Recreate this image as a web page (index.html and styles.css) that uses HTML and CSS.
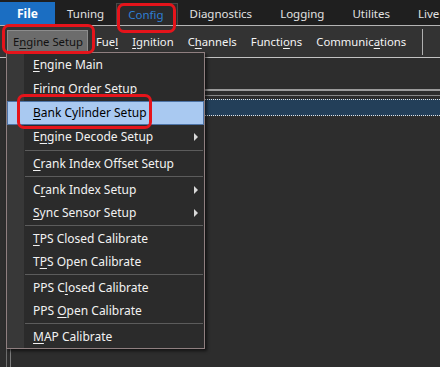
FILE: index.html
```html
<!DOCTYPE html>
<html lang="en">
<head>
  <meta charset="UTF-8" />
  <title>Config - Engine Setup</title>
  <link rel="stylesheet" href="styles.css">
</head>
<body>
  <div class="app">
    <div class="tabbar">
      <div class="tab tab-file">File</div>
      <div class="tab">Tuning</div>
      <div class="tab tab-active">Config</div>
      <div class="tab">Diagnostics</div>
      <div class="tab">Logging</div>
      <div class="tab">Utilites</div>
      <div class="tab tab-last">Live Data</div>
    </div>

    <div class="toolbar">
      <div class="tool tool-pressed">E<u>n</u>gine Setup</div>
      <div class="tool">Fue<u>l</u></div>
      <div class="tool"><u>I</u>gnition</div>
      <div class="tool">C<u>h</u>annels</div>
      <div class="tool">Functi<u>o</u>ns</div>
      <div class="tool">Communic<u>a</u>tions</div>
      <div class="tool-sep"></div>
    </div>

    <div class="workspace">
      <div class="side"></div>
      <div class="grid">
        <div class="grid-head"></div>
        <div class="grid-body">
          <div class="grid-row grid-row-selected"></div>
        </div>
      </div>
    </div>

    <div class="menu">
      <div class="menu-group menu-group-first">
        <div class="menu-item"><u>E</u>ngine Main</div>
        <div class="menu-item">Firing Order Setup</div>
        <div class="menu-item menu-item-active"><u>B</u>ank Cylinder Setup</div>
        <div class="menu-item has-sub">E<u>n</u>gine Decode Setup</div>
      </div>
      <div class="menu-sep"></div>
      <div class="menu-group">
        <div class="menu-item"><u>C</u>rank Index Offset Setup</div>
      </div>
      <div class="menu-sep"></div>
      <div class="menu-group">
        <div class="menu-item has-sub">C<u>r</u>ank Index Setup</div>
        <div class="menu-item has-sub"><u>S</u>ync Sensor Setup</div>
      </div>
      <div class="menu-sep"></div>
      <div class="menu-group">
        <div class="menu-item"><u>T</u>PS Closed Calibrate</div>
        <div class="menu-item">T<u>P</u>S Open Calibrate</div>
      </div>
      <div class="menu-sep"></div>
      <div class="menu-group">
        <div class="menu-item">PPS C<u>l</u>osed Calibrate</div>
        <div class="menu-item">PPS <u>O</u>pen Calibrate</div>
      </div>
      <div class="menu-sep"></div>
      <div class="menu-group">
        <div class="menu-item"><u>M</u>AP Calibrate</div>
      </div>
    </div>

    <!-- red highlight marks drawn over the screenshot -->
    <div class="callout callout-config"></div>
    <div class="callout callout-engine"></div>
    <div class="callout callout-bank"></div>
  </div>
</body>
</html>
```

FILE: styles.css
```css
:root {
  --bg: #2d2d2d;
  --fg: #ececec;
  --blue: #1b6ec2;
  --mark: #e5141b;
}

html, body {
  margin: 0;
  height: 100%;
}

body {
  font-family: "Noto Sans", "Open Sans", sans-serif;
  font-size: 12px;
  background: var(--bg);
  color: var(--fg);
  overflow: hidden;
}

u { text-underline-offset: 2px; }

.app {
  position: relative;
  height: 367px;
  display: flex;
  flex-direction: column;
}

/* ribbon tabs */
.tabbar {
  display: flex;
  align-items: flex-end;
  height: 25px;
  background: #1f1f1f;
  border-bottom: 1px solid #b4b4b4;
  white-space: nowrap;
  overflow: hidden;
  font-size: 11.5px;
}

.tab {
  flex-shrink: 0;
  height: 23px;
  line-height: 24px;
  padding: 0 16px 0 12px;
  color: #e2e2e2;
}

.tab-last { flex-shrink: 1; min-width: 0; overflow: hidden; padding-right: 0; }

.tab-file {
  width: 55px;
  padding: 0;
  box-sizing: border-box;
  text-align: center;
  background: var(--blue);
  color: #fff;
  font-weight: bold;
  font-size: 12px;
}

.tab-active {
  height: 21px;
  line-height: 21px;
  margin-bottom: -1px;
  padding: 0 13px 1px 11px;
  margin-left: -4px;
  background: #2a2a2a;
  border: 1px solid #474747;
  border-bottom: none;
  color: #2f7fd2;
}

/* menu strip */
.toolbar {
  display: flex;
  align-items: center;
  gap: 2px;
  height: 31px;
  padding-left: 7px;
  background: #333;
  border-bottom: 1px solid #c2c2c2;
  white-space: nowrap;
  font-size: 11.3px;
}

.tool {
  flex-shrink: 0;
  height: 23px;
  line-height: 22px;
  padding: 0 5px;
  border: 1px solid transparent;
  box-sizing: border-box;
  color: #f4f4f4;
}

.tool-pressed {
  padding: 0 4px 0 5px;
  background: #6c6c6c;
  border-color: #8c8c8c;
  color: #111;
}

.tool-sep {
  flex-shrink: 0;
  width: 1px;
  height: 26px;
  margin-left: 8px;
  background: #b0b0b0;
}

/* workspace behind the dropdown */
.workspace {
  flex: 1;
  display: flex;
  padding-left: 6px;
}

.side {
  width: 3px;
  border-left: 1px solid #6e6e6e;
  border-right: 1px solid #7c7c7c;
}

.grid {
  flex: 1;
}

.grid-head {
  height: 31px;
  border-bottom: 2px solid #9a9a9a;
}

.grid-body {
  margin-top: 4px;
  border-top: 1px solid #868686;
  padding-top: 3px;
}

.grid-row {
  height: 15px;
}

.grid-row-selected {
  background: #233f59;
  border-top: 1px dotted #e4e4e4;
  border-bottom: 1px dotted #e4e4e4;
}

/* dropdown */
.menu {
  position: absolute;
  left: 6px;
  top: 52px;
  width: 199px;
  box-sizing: border-box;
  border: 1px solid #8f7f80;
  background: linear-gradient(to right, #383838 17px, #2b2b2b 17px);
  box-shadow: 2px 2px 3px rgba(0, 0, 0, 0.6);
}

.menu-item {
  position: relative;
  height: 23px;
  line-height: 23px;
  padding-left: 26px;
  color: #f2f2f2;
  white-space: nowrap;
}

.menu-group-first .menu-item {
  height: 24px;
  line-height: 24px;
}

.menu-item-active {
  box-sizing: border-box;
  padding-left: 25px;
  background: #a9c9f1;
  border: 1px solid #4d73a6;
  color: #000;
}

.menu-group-first .menu-item-active { line-height: 22px; }

.has-sub::after {
  content: "";
  position: absolute;
  right: 6px;
  top: 50%;
  margin-top: -4px;
  border-left: 4px solid #d8d8d8;
  border-top: 4px solid transparent;
  border-bottom: 4px solid transparent;
}

.menu-sep {
  height: 1px;
  margin: 1px 1px 1px 18px;
  background: #5c5c5c;
}

/* annotation marks */
.callout {
  position: absolute;
  border: 3px solid var(--mark);
  border-radius: 7px;
  box-sizing: border-box;
}

.callout-config { left: 117px; top: 3px; width: 59px; height: 30px; }
.callout-engine { left: 2px; top: 24px; width: 93px; height: 30px; }
.callout-bank { left: 17px; top: 94px; width: 135px; height: 35px; }
```
